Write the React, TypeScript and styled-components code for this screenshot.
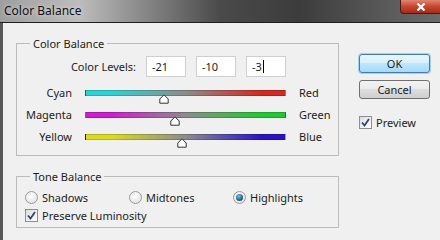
import React from "react";
import styled, { createGlobalStyle } from "styled-components";

const GlobalStyle = createGlobalStyle`
  html, body { margin: 0; padding: 0; }
  body {
    width: 440px;
    height: 240px;
    overflow: hidden;
    background: #f0f0f0;
    font-family: "Noto Sans", "DejaVu Sans", sans-serif;
    font-size: 11px;
    color: #1c1c1c;
  }
`;

const Window = styled.div`
  width: 440px;
  height: 240px;
  display: flex;
  flex-direction: column;
`;

const TitleBar = styled.div`
  height: 22px;
  flex: none;
  display: flex;
  align-items: flex-start;
  border-bottom: 1px solid #1e1e1e;
  background: linear-gradient(90deg, #9e9e9e 0%, #bdbdbd 18%, #8a8a8a 32%, #4a4a4a 50%, #3c3c3c 68%, #5a5a5a 88%, #6a6a6a 100%);
`;

const Title = styled.div`
  padding: 3px 0 0 4px;
  line-height: 16px;
  font-size: 12px;
  color: #111;
  text-shadow: 0 0 4px rgba(255, 255, 255, 0.7);
`;

const CloseButton = styled.div`
  margin-left: auto;
  width: 40px;
  height: 14px;
  box-sizing: border-box;
  border: 1px solid #4a1a12;
  border-top: none;
  border-right: none;
  border-bottom-left-radius: 4px;
  background: linear-gradient(#e08672, #c6472f 50%, #a52c1b);
  display: flex;
  align-items: center;
  justify-content: center;
`;

const Body = styled.div`
  flex: 1;
  display: flex;
  gap: 20px;
  padding: 13px 0 0 13px;
  border-left: 3px solid #575757;
  background: #f0f0f0;
`;

const LeftColumn = styled.div`
  width: 323px;
  display: flex;
  flex-direction: column;
  gap: 13px;
`;

const Group = styled.fieldset`
  margin: 0;
  padding: 0;
  border: 1px solid #bcbcbc;
  min-width: 0;
`;

const Legend = styled.legend`
  margin-left: 13px;
  padding: 0 3px;
  line-height: 15px;
`;

const GroupContent = styled.div<{ $top: number; $bottom: number }>`
  padding: ${(p) => p.$top}px 0 ${(p) => p.$bottom}px 8px;
  display: flex;
  flex-direction: column;
`;

const LevelsRow = styled.div`
  display: flex;
  align-items: center;
  gap: 10px;
  margin-bottom: 9px;
`;

const LevelsLabel = styled.div`
  width: 111px;
  text-align: right;
`;

const Field = styled.div`
  width: 40px;
  height: 21px;
  box-sizing: border-box;
  border: 1px solid #cfcfcf;
  background: #fff;
  padding-left: 5px;
  display: flex;
  align-items: center;
`;

const Caret = styled.span`
  width: 1px;
  height: 13px;
  background: #000;
  margin-left: 1px;
`;

const SliderRows = styled.div`
  display: flex;
  flex-direction: column;
  gap: 10px;
`;

const SliderRow = styled.div`
  display: grid;
  grid-template-columns: 47px 201px auto;
  column-gap: 13px;
  align-items: center;
  height: 12px;
`;

const SideLabel = styled.div<{ $align: "left" | "right" }>`
  text-align: ${(p) => p.$align};
  line-height: 14px;
  white-space: nowrap;
`;

const Track = styled.div`
  position: relative;
  height: 6px;
`;

const Bar = styled.div<{ $from: string; $to: string }>`
  height: 6px;
  box-sizing: border-box;
  border: 1px solid rgba(0, 0, 0, 0.18);
  background: linear-gradient(90deg, ${(p) => p.$from} 0%, ${(p) => p.$from} 12%, #8c8c8c 50%, ${(p) => p.$to} 88%, ${(p) => p.$to} 100%);
`;

const Thumb = styled.svg`
  position: absolute;
  top: 4px;
  width: 10px;
  height: 10px;
  margin-left: -5px;
`;

const RadioRow = styled.div`
  display: grid;
  grid-template-columns: 104px 104px 104px;
  margin-bottom: 4px;
`;

const Option = styled.div`
  display: flex;
  align-items: center;
  gap: 4px;
  height: 14px;
`;

const Radio = styled.span<{ $checked?: boolean }>`
  width: 13px;
  height: 13px;
  box-sizing: border-box;
  border-radius: 50%;
  border: 1px solid #9a9a9a;
  background: radial-gradient(circle at 40% 35%, #ffffff, #dcdcdc);
  display: flex;
  align-items: center;
  justify-content: center;
  &::after {
    content: "";
    display: ${(p) => (p.$checked ? "block" : "none")};
    width: 7px;
    height: 7px;
    border-radius: 50%;
    background: radial-gradient(circle at 40% 35%, #7fc3e6, #1d5f8e 60%, #0e3350);
  }
`;

const Box = styled.span`
  width: 13px;
  height: 13px;
  box-sizing: border-box;
  border: 1px solid #8e8e8e;
  background: linear-gradient(135deg, #dcdcdc, #ffffff);
  display: flex;
  align-items: center;
  justify-content: center;
`;

const RightColumn = styled.div`
  width: 71px;
  padding-top: 18px;
  display: flex;
  flex-direction: column;
`;

const Button = styled.div<{ $primary?: boolean }>`
  height: 19px;
  box-sizing: border-box;
  border-radius: 3px;
  border: 1px solid ${(p) => (p.$primary ? "#3c7fb1" : "#707070")};
  background: ${(p) =>
    p.$primary
      ? "linear-gradient(#eaf6fd 0%, #d9f0fc 45%, #bee6fd 50%, #a7d9f5 100%)"
      : "linear-gradient(#f2f2f2 0%, #ebebeb 45%, #dddddd 50%, #cfcfcf 100%)"};
  box-shadow: ${(p) => (p.$primary ? "0 0 0 1px #9fd3f3" : "none")};
  display: flex;
  align-items: center;
  justify-content: center;
  line-height: 14px;
  margin-bottom: ${(p) => (p.$primary ? 7 : 16)}px;
`;

const Check = () => (
  <svg width="9" height="9" viewBox="0 0 9 9">
    <path d="M1 4.5 L3.5 7.5 L8 1" fill="none" stroke="#33427a" strokeWidth="1.8" />
  </svg>
);

const sliders = [
  { left: "Cyan", right: "Red", from: "#2fd2d2", to: "#d22a22", value: -21 },
  { left: "Magenta", right: "Green", from: "#cc1ecc", to: "#22c832", value: -10 },
  { left: "Yellow", right: "Blue", from: "#dcdc1e", to: "#2a14c4", value: -3 },
];

export default function App() {
  return (
    <Window>
      <GlobalStyle />
      <TitleBar>
        <Title>Color Balance</Title>
        <CloseButton>
          <svg width="10" height="8" viewBox="0 0 10 8">
            <path d="M1.5 0.5 L8.5 7.5 M8.5 0.5 L1.5 7.5" stroke="#fff" strokeWidth="2.2" />
          </svg>
        </CloseButton>
      </TitleBar>
      <Body>
        <LeftColumn>
          <Group>
            <Legend>Color Balance</Legend>
            <GroupContent $top={5} $bottom={13}>
              <LevelsRow>
                <LevelsLabel>Color Levels:</LevelsLabel>
                <Field>-21</Field>
                <Field>-10</Field>
                <Field>
                  -3<Caret />
                </Field>
              </LevelsRow>
              <SliderRows>
                {sliders.map((s) => (
                  <SliderRow key={s.left}>
                    <SideLabel $align="right">{s.left}</SideLabel>
                    <Track>
                      <Bar $from={s.from} $to={s.to} />
                      <Thumb viewBox="0 0 10 10" style={{ left: `${(s.value + 100) / 2}%` }}>
                        <path d="M5 0.8 L9.2 5 L9.2 9.2 L0.8 9.2 L0.8 5 Z" fill="#fff" stroke="#333" strokeWidth="1" />
                      </Thumb>
                    </Track>
                    <SideLabel $align="left">{s.right}</SideLabel>
                  </SliderRow>
                ))}
              </SliderRows>
            </GroupContent>
          </Group>
          <Group>
            <Legend>Tone Balance</Legend>
            <GroupContent $top={6} $bottom={5}>
              <RadioRow>
                <Option>
                  <Radio />
                  Shadows
                </Option>
                <Option>
                  <Radio />
                  Midtones
                </Option>
                <Option>
                  <Radio $checked />
                  Highlights
                </Option>
              </RadioRow>
              <Option>
                <Box>
                  <Check />
                </Box>
                Preserve Luminosity
              </Option>
            </GroupContent>
          </Group>
        </LeftColumn>
        <RightColumn>
          <Button $primary>OK</Button>
          <Button>Cancel</Button>
          <Option>
            <Box>
              <Check />
            </Box>
            Preview
          </Option>
        </RightColumn>
      </Body>
    </Window>
  );
}
